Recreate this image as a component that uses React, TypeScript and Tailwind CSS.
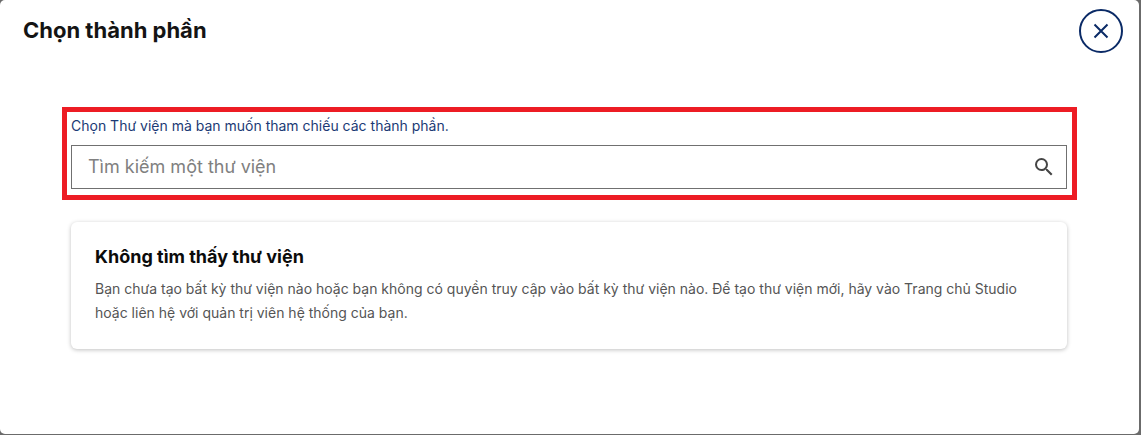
export default function App() {
  return (
    <div className="h-[435px] w-[1141px] overflow-hidden bg-[#6b6b6b] font-['Inter','Noto_Sans',sans-serif]">
      <div className="h-[434px] w-[1139px] rounded-[5px] bg-white">
        <div className="flex items-start justify-between pl-[23px] pr-[16px] pt-[9px]">
          <h1 className="pt-[7px] text-[22px] leading-[28px] font-bold text-[#141414]">
            Chọn thành phần
          </h1>
          <button className="flex h-[44px] w-[44px] items-center justify-center rounded-full border-2 border-[#0a2a66] text-[#0a2a66]">
            <svg
              xmlns="http://www.w3.org/2000/svg"
              viewBox="0 0 24 24"
              fill="none"
              stroke="currentColor"
              strokeWidth="2"
              className="h-[24px] w-[24px]"
            >
              <path d="M5.5 5.5l13 13M18.5 5.5l-13 13" />
            </svg>
          </button>
        </div>

        <div className="ml-[62px] mt-[54px] w-[1015px] border-[5px] border-[#ed1c24] px-[4px] pb-[6px] pt-[3px]">
          <p className="text-[14px] leading-[21px] text-[#1b3a75]">
            Chọn Thư viện mà bạn muốn tham chiếu các thành phần.
          </p>
          <div className="mt-[9px] flex h-[44px] w-[996px] items-center justify-between border border-[#707070] pl-[16px] pr-[10px]">
            <span className="pb-[2px] text-[18px] text-[#808080]">Tìm kiếm một thư viện</span>
            <svg
              xmlns="http://www.w3.org/2000/svg"
              viewBox="0 0 24 24"
              fill="#454545"
              className="h-[24px] w-[24px]"
            >
              <path d="M15.5 14h-.79l-.28-.27A6.471 6.471 0 0 0 16 9.5 6.5 6.5 0 1 0 9.5 16c1.61 0 3.09-.59 4.23-1.57l.27.28v.79l5 4.99L20.49 19l-4.99-5zm-6 0C7.01 14 5 11.99 5 9.5S7.01 5 9.5 5 14 7.01 14 9.5 11.99 14 9.5 14z" />
            </svg>
          </div>
        </div>

        <div className="ml-[71px] mt-[22px] h-[127px] w-[996px] rounded-md bg-white px-[24px] pt-[23px] shadow-[0_1px_4px_rgba(0,0,0,0.25)]">
          <h2 className="text-[18px] leading-[24px] font-bold text-[#0b0b0b]">
            Không tìm thấy thư viện
          </h2>
          <p className="mt-[8px] text-[14px] leading-[24px] text-[#555555]">
            Bạn chưa tạo bất kỳ thư viện nào hoặc bạn không có quyền truy cập vào bất kỳ thư viện nào. Để tạo thư viện mới, hãy vào Trang chủ Studio hoặc liên hệ với quản trị viên hệ thống của bạn.
          </p>
        </div>
      </div>
    </div>
  );
}
